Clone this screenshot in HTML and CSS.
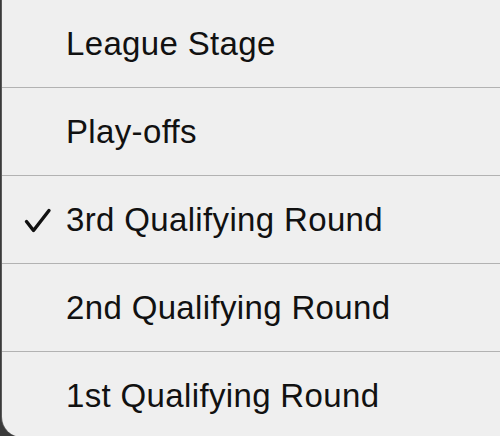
FILE: index.html
```html
<!DOCTYPE html>
<html>
<head>
<meta charset="utf-8">
<link rel="stylesheet" href="styles.css">
</head>
<body>
<div class="menu">
  <div class="item"><span class="check"></span><span class="label">League Stage</span></div>
  <div class="item"><span class="check"></span><span class="label">Play-offs</span></div>
  <div class="item"><span class="check"><svg width="28" height="26" viewBox="0 0 28 26"><path d="M2.5 14.5 L9.5 23.5 L25 3.5" fill="none" stroke="#111" stroke-width="3.4" stroke-linecap="round" stroke-linejoin="round"/></svg></span><span class="label">3rd Qualifying Round</span></div>
  <div class="item"><span class="check"></span><span class="label">2nd Qualifying Round</span></div>
  <div class="item last"><span class="check"></span><span class="label">1st Qualifying Round</span></div>
</div>
</body>
</html>
```
FILE: styles.css
```css
html, body {
  margin: 0;
  padding: 0;
  height: 436px;
  overflow: hidden;
}
body {
  background: #3a3a3a;
  font-family: "Liberation Sans", Arial, sans-serif;
}
.menu {
  margin-left: 2px;
  height: 437px;
  background: #efefef;
  border-bottom-left-radius: 20px;
  overflow: hidden;
  box-shadow: -1px 0 0 #5a5a5a;
}
.item {
  height: 87px;
  border-bottom: 1px solid #b2b2b2;
  display: flex;
  align-items: center;
}
.item.last {
  border-bottom: none;
}
.check {
  width: 64px;
  display: flex;
  padding-left: 22px;
  box-sizing: border-box;
}
.label {
  font-size: 33px;
  color: #111;
  letter-spacing: 0.35px;
}
```
